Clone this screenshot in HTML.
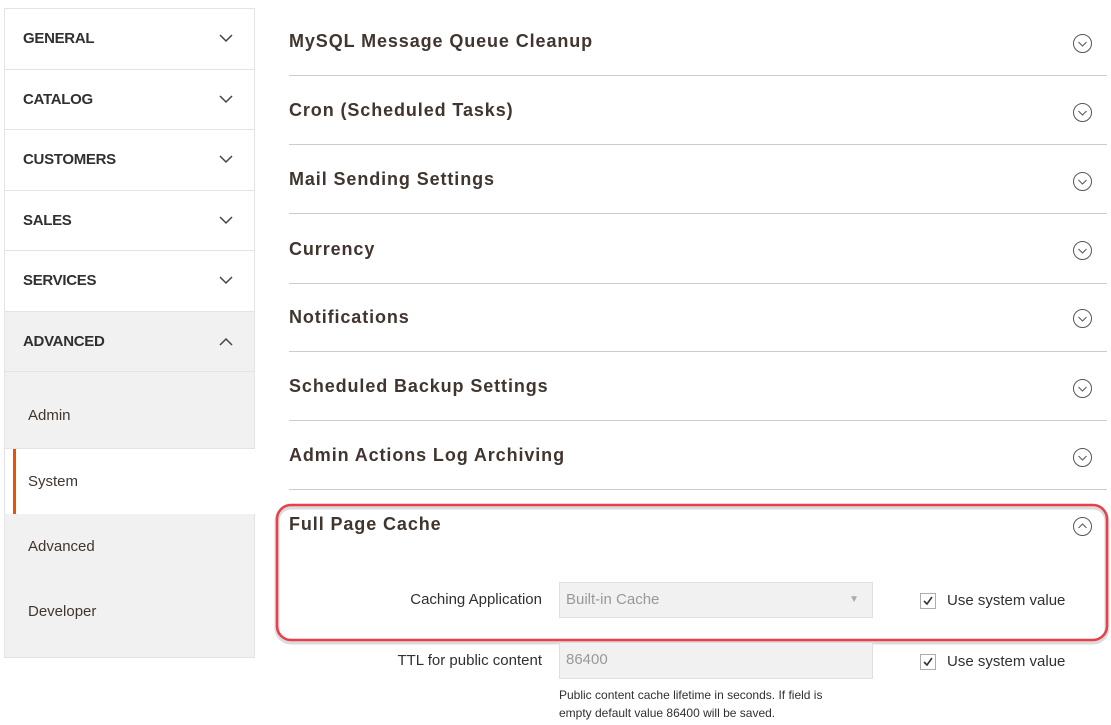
<!DOCTYPE html>
<html><head><style>
*{margin:0;padding:0;box-sizing:border-box}
body{width:1111px;height:725px;background:#fff;font-family:"Liberation Sans",sans-serif;color:#303030;position:relative;overflow:hidden}
.sb{position:absolute;left:4px;top:8px;width:251px;border:1px solid #e3e3e3;border-bottom:none}
.h{height:60.5px;border-bottom:1px solid #e3e3e3;position:relative;font-weight:bold;font-size:15px;padding-left:18px;line-height:59px;color:#303030;letter-spacing:-0.3px}
.h svg{position:absolute;right:21px;top:25px}
.adv{background:#f1f1f1}
.sub{background:#f1f1f1;font-size:15px;color:#41362f;padding-left:23px;position:relative;border-bottom:1px solid #e3e3e3}
.sys{background:#fff;border-left:3px solid #eb5202;margin-left:8px;padding-left:12px;margin-right:-2px}
.sec{position:absolute;left:289px;width:818px;border-bottom:1px solid #cccccc;font-size:18px;font-weight:bold;color:#41362f;letter-spacing:0.9px;padding-top:5px}
.lbl{position:absolute;font-size:15px;color:#303030;text-align:right;width:260px;left:282px}
.inp{position:absolute;left:559px;width:314px;height:36px;background:#f1f1f1;border:1px solid #e0e0e0;font-size:15px;color:#999;padding-left:6px;line-height:34px}
.cb{position:absolute;left:920px;width:16px;height:16px;border:1px solid #adadad;background:#fff}
.cbt{position:absolute;left:947px;font-size:15px;color:#303030}
</style></head><body>
<div class="sb">
<div class="h">GENERAL<svg width="14" height="9"><path d="M1 1l6 6 6-6" stroke="#444" stroke-width="1.5" fill="none"/></svg></div>
<div class="h">CATALOG<svg width="14" height="9"><path d="M1 1l6 6 6-6" stroke="#444" stroke-width="1.5" fill="none"/></svg></div>
<div class="h">CUSTOMERS<svg width="14" height="9"><path d="M1 1l6 6 6-6" stroke="#444" stroke-width="1.5" fill="none"/></svg></div>
<div class="h">SALES<svg width="14" height="9"><path d="M1 1l6 6 6-6" stroke="#444" stroke-width="1.5" fill="none"/></svg></div>
<div class="h">SERVICES<svg width="14" height="9"><path d="M1 1l6 6 6-6" stroke="#444" stroke-width="1.5" fill="none"/></svg></div>
<div class="h adv">ADVANCED<svg width="14" height="9"><path d="M1 8l6-6 6 6" stroke="#444" stroke-width="1.5" fill="none"/></svg></div>
<div class="sub" style="height:77px;line-height:87px">Admin</div>
<div class="sub sys" style="height:65px;line-height:65px;border-bottom:none">System</div>
<div class="sub" style="height:66px;line-height:66px;border-bottom:none">Advanced</div>
<div class="sub" style="height:78px;line-height:64px">Developer</div>
</div>

<div class="sec" style="top:26px;height:50px">MySQL Message Queue Cleanup</div>
<div class="sec" style="top:95px;height:50px">Cron (Scheduled Tasks)</div>
<div class="sec" style="top:164px;height:50px">Mail Sending Settings</div>
<div class="sec" style="top:234px;height:50px">Currency</div>
<div class="sec" style="top:302px;height:50px">Notifications</div>
<div class="sec" style="top:371px;height:50px">Scheduled Backup Settings</div>
<div class="sec" style="top:440px;height:50px">Admin Actions Log Archiving</div>
<div class="sec" style="top:509px;border:none">Full Page Cache</div>

<svg style="position:absolute;left:0;top:0" width="1111" height="725">
<g fill="none" stroke="#555" stroke-width="1">
<circle cx="1082.5" cy="43.5" r="9"/><path d="M1078.5 42l4 4 4-4"/>
<circle cx="1082.5" cy="112.5" r="9"/><path d="M1078.5 111l4 4 4-4"/>
<circle cx="1082.5" cy="181.5" r="9"/><path d="M1078.5 180l4 4 4-4"/>
<circle cx="1082.5" cy="250.5" r="9"/><path d="M1078.5 249l4 4 4-4"/>
<circle cx="1082.5" cy="318.5" r="9"/><path d="M1078.5 317l4 4 4-4"/>
<circle cx="1082.5" cy="388.5" r="9"/><path d="M1078.5 387l4 4 4-4"/>
<circle cx="1082.5" cy="457.5" r="9"/><path d="M1078.5 456l4 4 4-4"/>
<circle cx="1082.5" cy="526.5" r="9"/><path d="M1078.5 528l4-4 4 4"/>
</g>
<rect x="277" y="505" width="830" height="135" rx="14" fill="none" stroke="#999" stroke-opacity="0.35" stroke-width="5" transform="translate(0,2)"/>
<rect x="277" y="505" width="830" height="135" rx="14" fill="none" stroke="#e8404a" stroke-width="2.5"/>
</svg>

<div class="lbl" style="top:591px">Caching Application</div>
<div class="inp" style="top:582px">Built-in Cache<span style="position:absolute;right:13px;font-size:10px;color:#aaa">▼</span></div>
<div class="cb" style="top:593px"><svg width="14" height="14"><path d="M3 7l3 3 5-7" stroke="#333" stroke-width="1.6" fill="none"/></svg></div>
<div class="cbt" style="top:592px">Use system value</div>

<div class="lbl" style="top:652px">TTL for public content</div>
<div class="inp" style="top:643px;border-top:none">86400</div>
<div class="cb" style="top:654px"><svg width="14" height="14"><path d="M3 7l3 3 5-7" stroke="#333" stroke-width="1.6" fill="none"/></svg></div>
<div class="cbt" style="top:653px">Use system value</div>
<div style="position:absolute;left:559px;top:686px;font-size:12px;line-height:18px;color:#303030">Public content cache lifetime in seconds. If field is<br>empty default value 86400 will be saved.</div>
</body></html>
